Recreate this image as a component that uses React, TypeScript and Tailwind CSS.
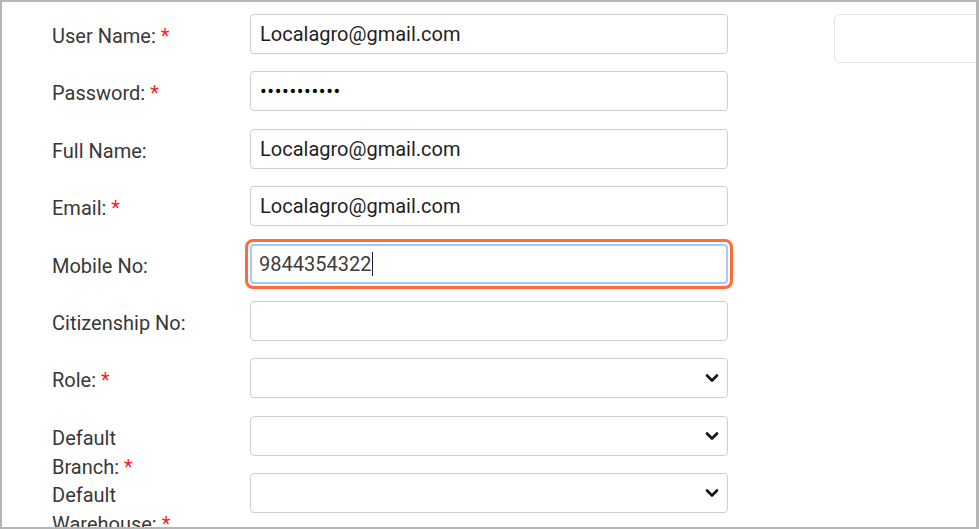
import type { ReactNode } from "react";

type Field = {
  label: ReactNode;
  required?: boolean;
  kind: "text" | "password" | "select" | "focused";
  value?: string;
};

const FIELDS: Field[] = [
  { label: "User Name:", required: true, kind: "text", value: "Localagro@gmail.com" },
  { label: "Password:", required: true, kind: "password", value: "•••••••••••" },
  { label: "Full Name:", kind: "text", value: "Localagro@gmail.com" },
  { label: "Email:", required: true, kind: "text", value: "Localagro@gmail.com" },
  { label: "Mobile No:", kind: "focused", value: "9844354322" },
  { label: "Citizenship No:", kind: "text", value: "" },
  { label: "Role:", required: true, kind: "select" },
  { label: "Default Branch:", required: true, kind: "select" },
  { label: "Default Warehouse:", required: true, kind: "select" },
];

function Chevron() {
  return (
    <svg
      className="pointer-events-none absolute right-[9px] top-1/2 -translate-y-1/2"
      width="14"
      height="10"
      viewBox="0 0 14 10"
      fill="none"
    >
      <path d="M2 2.5 7 7.5 12 2.5" stroke="#111" strokeWidth="2.6" strokeLinecap="round" strokeLinejoin="round" />
    </svg>
  );
}

function Control({ field }: { field: Field }) {
  const base =
    "h-[40px] w-[478px] rounded-[4px] border border-[#cfcfcf] bg-white px-[9px] text-[20px] text-[#1f1f1f] outline-none";

  if (field.kind === "select") {
    return (
      <div className="relative w-[478px]">
        <select className={`${base} appearance-none`} defaultValue="">
          <option value=""></option>
        </select>
        <Chevron />
      </div>
    );
  }

  if (field.kind === "focused") {
    return (
      <div className="-m-[5px] rounded-[8px] border-[3px] border-[#ff6b3a] p-[2px]">
        <div className="flex h-[40px] w-[478px] items-center rounded-[4px] border-2 border-[#a9c9f3] bg-white px-[7px] text-[20px] text-[#3d3d3d]">
          <span>{field.value}</span>
          <span className="ml-[1px] h-[24px] w-[1px] bg-[#222]" />
        </div>
      </div>
    );
  }

  if (field.kind === "password") {
    return (
      <div className={`${base} flex items-center text-[12px] tracking-[0.6px] text-black`}>
        {field.value}
      </div>
    );
  }

  return <input className={base} readOnly value={field.value} />;
}

export default function App() {
  return (
    <div
      className="relative h-[529px] w-[979px] overflow-hidden border-2 border-r-[3px] border-[#b5b5b5] bg-white"
      style={{ fontFamily: "Roboto, 'Liberation Sans', sans-serif" }}
    >
      <div className="flex pl-[50px] pt-[12px]">
        <div className="flex flex-col gap-[17.4px]">
          {FIELDS.map((f, i) => (
            <div key={i} className="flex h-[40px] items-start">
              <div className="w-[198px] pt-[8px] text-[20px] leading-[29px] text-[#383838]">
                <div className="max-w-[140px]">
                  {f.label}
                  {f.required && <span className="ml-[5px] text-[#ff1a1a]">*</span>}
                </div>
              </div>
              <Control field={f} />
            </div>
          ))}
        </div>
        <div className="ml-[106px] h-[49px] w-[200px] shrink-0 rounded-[6px] border border-[#e3e6ea]" />
      </div>
    </div>
  );
}
